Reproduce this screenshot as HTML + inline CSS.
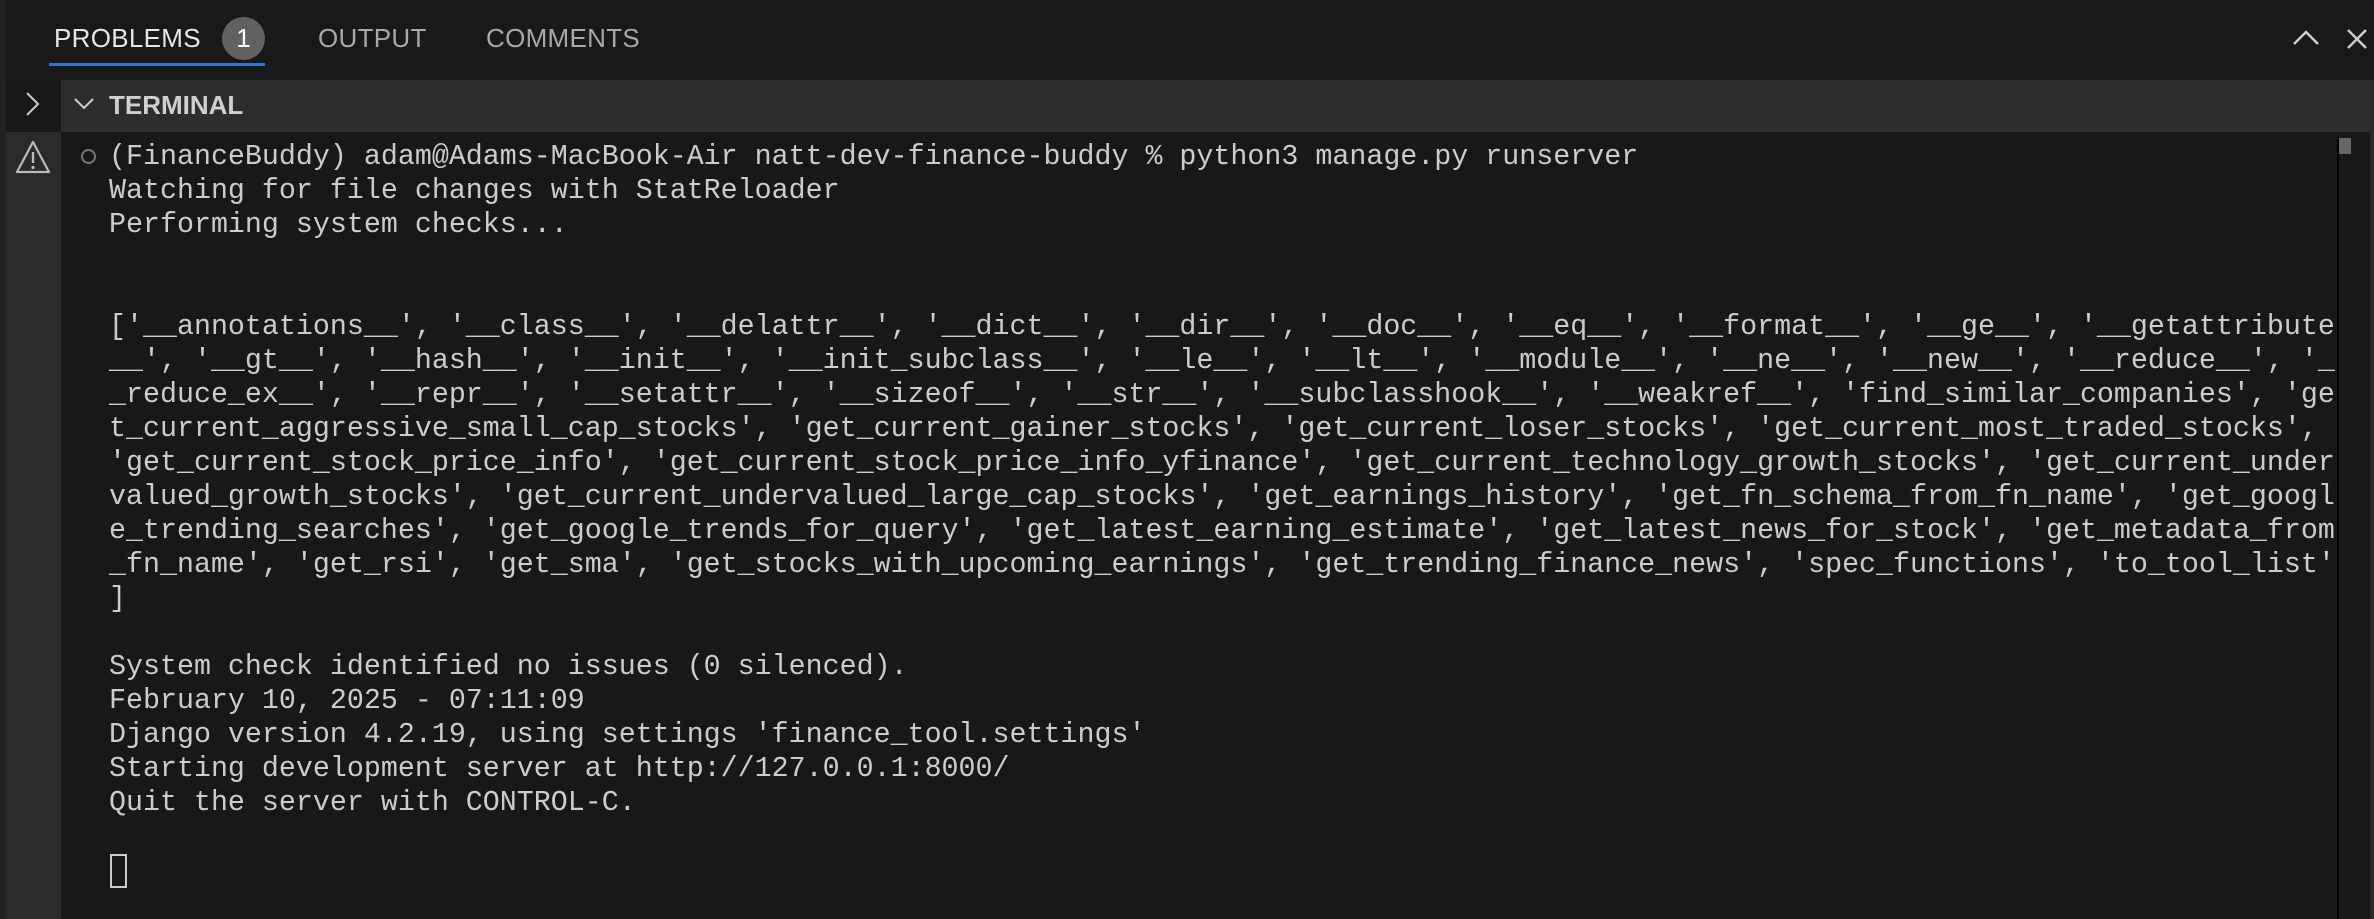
<!DOCTYPE html>
<html><head><meta charset="utf-8"><style>
*{margin:0;padding:0;box-sizing:border-box}
body{width:2374px;height:919px;background:#181818;position:relative;overflow:hidden;font-family:"Liberation Sans",sans-serif}
.abs{position:absolute}
.tab{position:absolute;top:23px;font-size:26px;color:#a8a8a8;letter-spacing:0.3px}
pre{position:absolute;left:109px;top:141px;font-family:"Liberation Mono",monospace;font-size:28.3px;line-height:33.98px;color:#cccccc;letter-spacing:0.01px}
</style></head><body>
<div class="abs" style="left:0;top:0;width:2374px;height:80px;background:#191919"></div>
<div class="abs" style="left:0;top:0;width:6px;height:919px;background:#222"></div>
<div class="tab" style="left:54px;color:#e6e6e6">PROBLEMS</div>
<div class="abs" style="left:222px;top:17px;width:43px;height:43px;border-radius:50%;background:#616161;color:#fff;font-size:26px;text-align:center;line-height:43px">1</div>
<div class="abs" style="left:49px;top:63px;width:216px;height:3px;background:#2b79d0"></div>
<div class="tab" style="left:318px">OUTPUT</div>
<div class="tab" style="left:486px">COMMENTS</div>
<svg class="abs" style="left:2290px;top:26px" width="84" height="24"><path d="M4 18 L16 6 L28 18" stroke="#ccc" stroke-width="2.5" fill="none"/><path d="M58 4 L76 22 M76 4 L58 22" stroke="#ccc" stroke-width="2.5" fill="none"/></svg>
<div class="abs" style="left:61px;top:80px;width:2309px;height:52px;background:#2d2d2d"></div>
<div class="abs" style="left:6px;top:132px;width:55px;height:787px;background:#2a2a2a"></div>
<svg class="abs" style="left:22px;top:90px" width="20" height="30"><path d="M5 3 L16 14 L5 25" stroke="#ccc" stroke-width="2" fill="none"/></svg>
<svg class="abs" style="left:72px;top:94px" width="24" height="20"><path d="M3 5 L12 14 L21 5" stroke="#ccc" stroke-width="2" fill="none"/></svg>
<div class="abs" style="left:109px;top:90px;font-size:26px;font-weight:bold;color:#d0d0d0">TERMINAL</div>
<svg class="abs" style="left:14px;top:139px" width="38" height="36"><path d="M19 3 L35 33 L3 33 Z" stroke="#bbb" stroke-width="2.2" fill="none" stroke-linejoin="round"/><path d="M19 13 V24" stroke="#bbb" stroke-width="2.4"/><circle cx="19" cy="28.5" r="1.6" fill="#bbb"/></svg>
<div class="abs" style="left:81px;top:149px;width:15px;height:15px;border-radius:50%;border:2.5px solid #777"></div>
<div class="abs" style="left:2337px;top:136px;width:2px;height:783px;background:#000"></div>
<div class="abs" style="left:2339px;top:138px;width:12px;height:16px;background:#666"></div>
<div class="abs" style="left:2370px;top:80px;width:4px;height:839px;background:#2a2a2a"></div>
<div class="abs" style="left:110px;top:854px;width:17px;height:34px;border:2px solid #ccc"></div>
<pre>(FinanceBuddy) adam@Adams-MacBook-Air natt-dev-finance-buddy % python3 manage.py runserver
Watching for file changes with StatReloader
Performing system checks...


['__annotations__', '__class__', '__delattr__', '__dict__', '__dir__', '__doc__', '__eq__', '__format__', '__ge__', '__getattribute
__', '__gt__', '__hash__', '__init__', '__init_subclass__', '__le__', '__lt__', '__module__', '__ne__', '__new__', '__reduce__', '_
_reduce_ex__', '__repr__', '__setattr__', '__sizeof__', '__str__', '__subclasshook__', '__weakref__', 'find_similar_companies', 'ge
t_current_aggressive_small_cap_stocks', 'get_current_gainer_stocks', 'get_current_loser_stocks', 'get_current_most_traded_stocks',
'get_current_stock_price_info', 'get_current_stock_price_info_yfinance', 'get_current_technology_growth_stocks', 'get_current_under
valued_growth_stocks', 'get_current_undervalued_large_cap_stocks', 'get_earnings_history', 'get_fn_schema_from_fn_name', 'get_googl
e_trending_searches', 'get_google_trends_for_query', 'get_latest_earning_estimate', 'get_latest_news_for_stock', 'get_metadata_from
_fn_name', 'get_rsi', 'get_sma', 'get_stocks_with_upcoming_earnings', 'get_trending_finance_news', 'spec_functions', 'to_tool_list'
]

System check identified no issues (0 silenced).
February 10, 2025 - 07:11:09
Django version 4.2.19, using settings 'finance_tool.settings'
Starting development server at http://127.0.0.1:8000/
Quit the server with CONTROL-C.
</pre>
</body></html>
